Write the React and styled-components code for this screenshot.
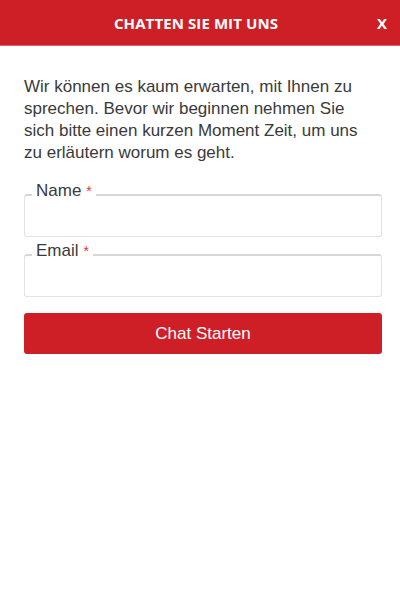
import React from "react";
import styled, { createGlobalStyle } from "styled-components";

const GlobalStyle = createGlobalStyle`
  html, body {
    margin: 0;
    padding: 0;
    background: #ffffff;
  }
  body {
    font-family: "Liberation Sans", Arial, sans-serif;
  }
`;

const Page = styled.div`
  width: 400px;
  height: 600px;
  display: flex;
  flex-direction: column;
  background: #ffffff;
`;

const Header = styled.header`
  height: 46px;
  background: #cf1f26;
  display: flex;
  align-items: center;
  justify-content: center;
  position: relative;
  border-bottom: 1px solid #d9646a;
  box-sizing: border-box;
`;

const Title = styled.h1`
  margin: 0;
  margin-left: -8px;
  color: #ffffff;
  font-family: "Open Sans", sans-serif;
  font-size: 15px;
  font-weight: 700;
  letter-spacing: 0.1px;
`;

const CloseBtn = styled.button`
  position: absolute;
  right: 13px;
  top: 50%;
  transform: translateY(-50%);
  background: none;
  border: none;
  padding: 0;
  color: #ffffff;
  font-family: "Open Sans", sans-serif;
  font-size: 15px;
  font-weight: 700;
  cursor: pointer;
`;

const Body = styled.div`
  padding: 30px 18px 0 24px;
  display: flex;
  flex-direction: column;
`;

const Intro = styled.p`
  margin: 0 10px 17px 0;
  color: #3a3a3a;
  font-size: 17px;
  line-height: 22px;
`;

const Field = styled.fieldset`
  margin: 0 0 4px;
  padding: 0;
  height: 56px;
  box-sizing: border-box;
  border: 1px solid #e2e2e2;
  border-top: 2px solid #d6d6d6;
  border-radius: 3px;
  min-width: 0;
`;

const Legend = styled.legend`
  margin-left: 7px;
  padding: 0 4px 8px 4px;
  color: #3a3a3a;
  font-size: 17px;
  line-height: 20px;
`;

const Required = styled.span`
  color: #e0303a;
  margin-left: 5px;
  font-size: 14px;
`;

const Input = styled.input`
  width: 100%;
  height: 100%;
  box-sizing: border-box;
  border: none;
  outline: none;
  background: transparent;
  padding: 0 10px;
  font-size: 16px;
  font-family: inherit;
`;

const StartButton = styled.button`
  margin-top: 12px;
  height: 41px;
  width: 100%;
  border: none;
  border-radius: 3px;
  background: #cf1f26;
  color: #ffffff;
  font-family: "Liberation Sans", Arial, sans-serif;
  font-size: 17px;
  cursor: pointer;
`;

const App = () => {
  return (
    <Page>
      <GlobalStyle />
      <Header>
        <Title>CHATTEN SIE MIT UNS</Title>
        <CloseBtn>X</CloseBtn>
      </Header>
      <Body>
        <Intro>
          Wir können es kaum erwarten, mit Ihnen zu sprechen. Bevor wir
          beginnen nehmen Sie sich bitte einen kurzen Moment Zeit, um uns zu
          erläutern worum es geht.
        </Intro>
        <Field>
          <Legend>
            Name<Required>*</Required>
          </Legend>
          <Input type="text" />
        </Field>
        <Field>
          <Legend>
            Email<Required>*</Required>
          </Legend>
          <Input type="email" />
        </Field>
        <StartButton>Chat Starten</StartButton>
      </Body>
    </Page>
  );
};

export default App;
